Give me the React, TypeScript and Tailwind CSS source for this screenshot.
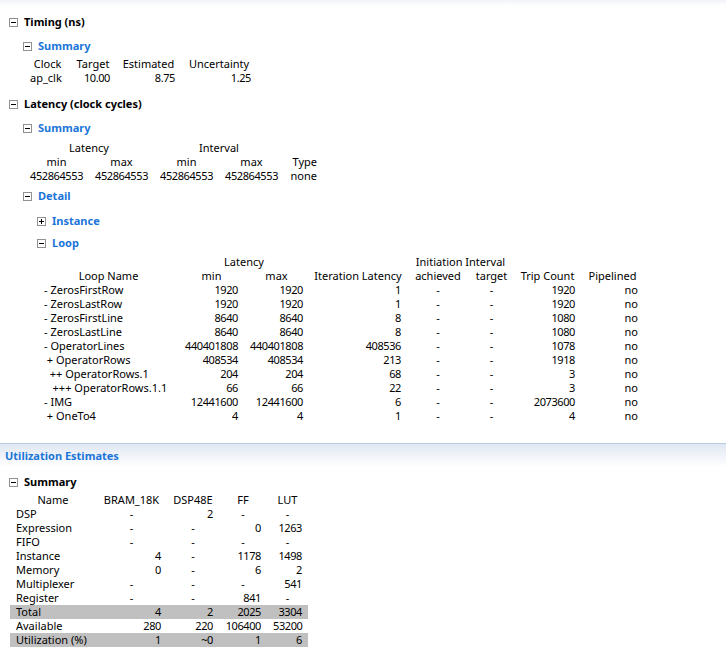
import React from 'react';

const BLUE = 'text-[#1b75d8]';

const LOOPS: Array<[string, string, string, string, string, string, string, string]> = [
  ['- ZerosFirstRow', '1920', '1920', '1', '-', '-', '1920', 'no'],
  ['- ZerosLastRow', '1920', '1920', '1', '-', '-', '1920', 'no'],
  ['- ZerosFirstLine', '8640', '8640', '8', '-', '-', '1080', 'no'],
  ['- ZerosLastLine', '8640', '8640', '8', '-', '-', '1080', 'no'],
  ['- OperatorLines', '440401808', '440401808', '408536', '-', '-', '1078', 'no'],
  ['\u00a0+ OperatorRows', '408534', '408534', '213', '-', '-', '1918', 'no'],
  ['\u00a0\u00a0++ OperatorRows.1', '204', '204', '68', '-', '-', '3', 'no'],
  ['\u00a0\u00a0\u00a0+++ OperatorRows.1.1', '66', '66', '22', '-', '-', '3', 'no'],
  ['- IMG', '12441600', '12441600', '6', '-', '-', '2073600', 'no'],
  ['\u00a0+ OneTo4', '4', '4', '1', '-', '-', '4', 'no'],
];

const UTIL: Array<{ name: string; v: string[]; shade?: boolean }> = [
  { name: 'DSP', v: ['-', '2', '-', '-'] },
  { name: 'Expression', v: ['-', '-', '0', '1263'] },
  { name: 'FIFO', v: ['-', '-', '-', '-'] },
  { name: 'Instance', v: ['4', '-', '1178', '1498'] },
  { name: 'Memory', v: ['0', '-', '6', '2'] },
  { name: 'Multiplexer', v: ['-', '-', '-', '541'] },
  { name: 'Register', v: ['-', '-', '841', '-'] },
  { name: 'Total', v: ['4', '2', '2025', '3304'], shade: true },
  { name: 'Available', v: ['280', '220', '106400', '53200'] },
  { name: 'Utilization (%)', v: ['1', '~0', '1', '6'], shade: true },
];

function Toggle({ open = true }: { open?: boolean }) {
  return (
    <span className="relative inline-block w-[9px] h-[9px] border border-[#919191] bg-white shrink-0">
      <span className="absolute left-[1px] top-[3px] w-[5px] h-[1px] bg-black" />
      {!open && <span className="absolute left-[3px] top-[1px] w-[1px] h-[5px] bg-black" />}
    </span>
  );
}

function Heading({
  indent,
  blue,
  open = true,
  className = '',
  children,
}: {
  indent: 0 | 1 | 2;
  blue?: boolean;
  open?: boolean;
  className?: string;
  children: React.ReactNode;
}) {
  const pad = indent === 0 ? 'pl-[9px]' : indent === 1 ? 'pl-[23px]' : 'pl-[37px]';
  return (
    <div className={`flex items-center h-[16px] ${pad} ${className}`}>
      <Toggle open={open} />
      <span className={`ml-[6px] font-bold leading-[16px] ${blue ? BLUE : 'text-black'}`}>{children}</span>
    </div>
  );
}

// dashes sit in the middle of a column, numbers hug the right edge
function Num({ v }: { v: string }) {
  const digits = /\d/.test(v);
  return (
    <td
      className={`px-[6px] whitespace-nowrap ${v === '-' ? 'text-center' : 'text-right'} ${
        digits ? 'tracking-[-0.4px]' : ''
      }`}
    >
      {v}
    </td>
  );
}

export default function App() {
  return (
    <div
      className="w-[726px] h-[652px] overflow-hidden bg-white text-black text-[11px]"
      style={{ fontFamily: '"Noto Sans", "Open Sans", sans-serif' }}
    >
      <div className="h-[6px] bg-gradient-to-b from-[#f1f3f7] to-white" />

      {/* Timing */}
      <Heading indent={0} className="mt-[8px]">Timing (ns)</Heading>
      <Heading indent={1} blue className="mt-[8px]">Summary</Heading>
      <table className="mt-[3px] ml-[25px] w-[232px] table-fixed border-collapse leading-[14px]">
        <colgroup>
          <col className="w-[45px]" />
          <col className="w-[46px]" />
          <col className="w-[65px]" />
          <col className="w-[76px]" />
        </colgroup>
        <tbody>
          <tr className="h-[14px]">
            <th className="font-normal text-center">Clock</th>
            <th className="font-normal text-center">Target</th>
            <th className="font-normal text-center">Estimated</th>
            <th className="font-normal text-center">Uncertainty</th>
          </tr>
          <tr className="h-[14px]">
            <td className="pl-[5px]">ap_clk</td>
            <Num v="10.00" />
            <Num v="8.75" />
            <Num v="1.25" />
          </tr>
        </tbody>
      </table>

      {/* Latency */}
      <Heading indent={0} className="mt-[11px]">Latency (clock cycles)</Heading>
      <Heading indent={1} blue className="mt-[8px]">Summary</Heading>
      <table className="mt-[5px] ml-[24px] w-[299px] table-fixed border-collapse leading-[14px]">
        <colgroup>
          <col className="w-[65px]" />
          <col className="w-[65px]" />
          <col className="w-[65px]" />
          <col className="w-[65px]" />
          <col className="w-[39px]" />
        </colgroup>
        <tbody>
          <tr className="h-[14px]">
            <th colSpan={2} className="font-normal text-center">Latency</th>
            <th colSpan={2} className="font-normal text-center">Interval</th>
            <th />
          </tr>
          <tr className="h-[14px]">
            <th className="font-normal text-center">min</th>
            <th className="font-normal text-center">max</th>
            <th className="font-normal text-center">min</th>
            <th className="font-normal text-center">max</th>
            <th className="font-normal text-right pr-[6px]">Type</th>
          </tr>
          <tr className="h-[14px]">
            <Num v="452864553" />
            <Num v="452864553" />
            <Num v="452864553" />
            <Num v="452864553" />
            <Num v="none" />
          </tr>
        </tbody>
      </table>

      <Heading indent={1} blue className="mt-[5px]">Detail</Heading>
      <Heading indent={2} blue open={false} className="mt-[9px]">Instance</Heading>
      <Heading indent={2} blue className="mt-[6px]">Loop</Heading>
      <table className="mt-[4px] ml-[38px] w-[606px] table-fixed border-collapse leading-[14px]">
        <colgroup>
          <col className="w-[141px]" />
          <col className="w-[65px]" />
          <col className="w-[65px]" />
          <col className="w-[98px]" />
          <col className="w-[62px]" />
          <col className="w-[45px]" />
          <col className="w-[67px]" />
          <col className="w-[63px]" />
        </colgroup>
        <tbody>
          <tr className="h-[14px]">
            <th />
            <th colSpan={2} className="font-normal text-center">Latency</th>
            <th />
            <th colSpan={2} className="font-normal text-center whitespace-nowrap">Initiation Interval</th>
            <th />
            <th />
          </tr>
          <tr className="h-[14px]">
            <th className="font-normal text-center">Loop Name</th>
            <th className="font-normal text-center">min</th>
            <th className="font-normal text-center">max</th>
            <th className="font-normal text-center whitespace-nowrap">Iteration Latency</th>
            <th className="font-normal text-center">achieved</th>
            <th className="font-normal text-center">target</th>
            <th className="font-normal text-center whitespace-nowrap">Trip Count</th>
            <th className="font-normal text-center">Pipelined</th>
          </tr>
          {LOOPS.map((row) => (
            <tr key={row[0]} className="h-[14px]">
              <td className="pl-[6px] whitespace-nowrap">{row[0]}</td>
              {row.slice(1).map((v, i) => (
                <Num key={i} v={v} />
              ))}
            </tr>
          ))}
        </tbody>
      </table>

      {/* Utilization */}
      <div className="mt-[20px] border-t border-[#b6cce4]" />
      <div className="h-[23px] pl-[5px] bg-gradient-to-b from-[#e0e7f2] to-white">
        <span className={`font-bold leading-[23px] ${BLUE}`}>Utilization Estimates</span>
      </div>
      <Heading indent={0} className="mt-[7px]">Summary</Heading>
      <table className="mt-[3px] ml-[10px] w-[298px] table-fixed border-collapse leading-[14px]">
        <colgroup>
          <col className="w-[86px]" />
          <col className="w-[71px]" />
          <col className="w-[52px]" />
          <col className="w-[48px]" />
          <col className="w-[41px]" />
        </colgroup>
        <tbody>
          <tr className="h-[14px]">
            <th className="font-normal text-center">Name</th>
            <th className="font-normal text-center">BRAM_18K</th>
            <th className="font-normal text-center">DSP48E</th>
            <th className="font-normal text-center">FF</th>
            <th className="font-normal text-center">LUT</th>
          </tr>
          {UTIL.map((r) => (
            <tr key={r.name} className={`h-[14px] ${r.shade ? 'bg-[#c0c0c0]' : ''}`}>
              <td className="pl-[6px] whitespace-nowrap">{r.name}</td>
              {r.v.map((v, i) => (
                <Num key={i} v={v} />
              ))}
            </tr>
          ))}
        </tbody>
      </table>
    </div>
  );
}
